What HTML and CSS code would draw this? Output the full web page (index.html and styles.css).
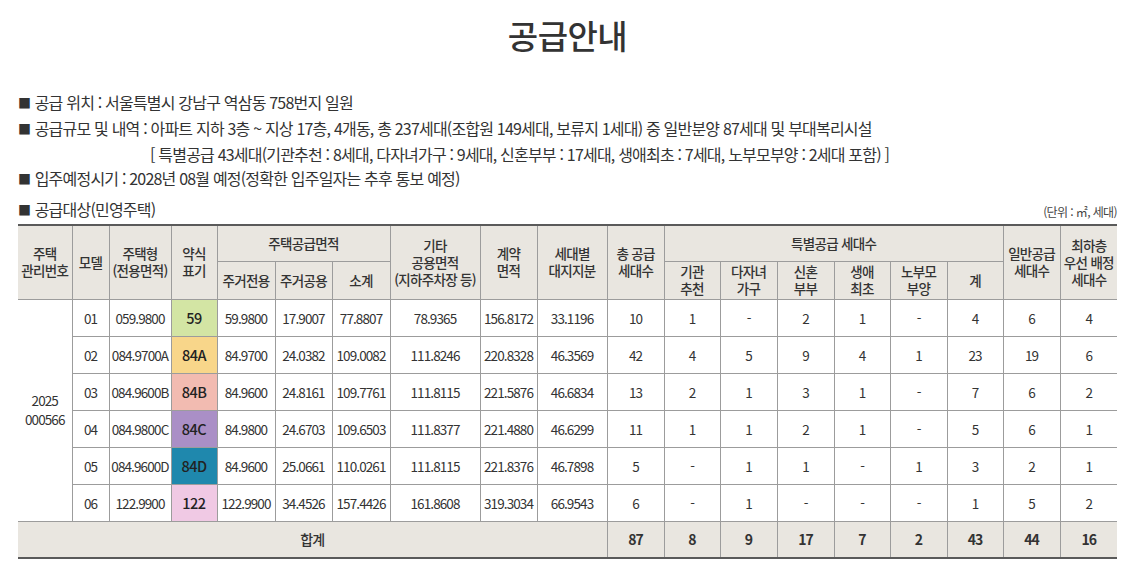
FILE: index.html
```html
<!DOCTYPE html>
<html lang="ko">
<head>
<meta charset="utf-8">
<title>공급안내</title>
<link rel="stylesheet" href="styles.css">
</head>
<body>
<div class="page">
  <h1 class="title">공급안내</h1>
  <ul class="info">
    <li><span class="sq">■</span> 공급 위치 : 서울특별시 강남구 역삼동 758번지 일원</li>
    <li><span class="sq">■</span> 공급규모 및 내역 : 아파트 지하 3층 ~ 지상 17층, 4개동, 총 237세대(조합원 149세대, 보류지 1세대) 중 일반분양 87세대 및 부대복리시설</li>
    <li class="indent">[ 특별공급 43세대(기관추천 : 8세대, 다자녀가구 : 9세대, 신혼부부 : 17세대, 생애최초 : 7세대, 노부모부양 : 2세대 포함) ]</li>
    <li><span class="sq">■</span> 입주예정시기 : 2028년 08월 예정(정확한 입주일자는 추후 통보 예정)</li>
  </ul>
  <div class="caption">
    <span class="cap-title"><span class="sq">■</span> 공급대상(민영주택)</span>
    <span class="unit">(단위 : ㎡, 세대)</span>
  </div>
  <table class="supply">
    <colgroup>
      <col class="w54"><col class="w37"><col class="w62"><col class="w46">
      <col class="w58"><col class="w57"><col class="w58"><col class="w90">
      <col class="w57"><col class="w70"><col class="w57"><col class="w56">
      <col class="w57"><col class="w57"><col class="w56"><col class="w57">
      <col class="w56"><col class="w57"><col class="w57">
    </colgroup>
    <thead>
      <tr class="h1">
        <th rowspan="2">주택<br>관리번호</th>
        <th rowspan="2">모델</th>
        <th rowspan="2">주택형<br>(전용면적)</th>
        <th rowspan="2">약식<br>표기</th>
        <th colspan="3">주택공급면적</th>
        <th rowspan="2">기타<br>공용면적<br>(지하주차장 등)</th>
        <th rowspan="2">계약<br>면적</th>
        <th rowspan="2">세대별<br>대지지분</th>
        <th rowspan="2">총 공급<br>세대수</th>
        <th colspan="6">특별공급 세대수</th>
        <th rowspan="2">일반공급<br>세대수</th>
        <th rowspan="2">최하층<br>우선 배정<br>세대수</th>
      </tr>
      <tr class="h2">
        <th>주거전용</th>
        <th>주거공용</th>
        <th>소계</th>
        <th>기관<br>추천</th>
        <th>다자녀<br>가구</th>
        <th>신혼<br>부부</th>
        <th>생애<br>최초</th>
        <th>노부모<br>부양</th>
        <th>계</th>
      </tr>
    </thead>
    <tbody>
      <tr>
        <td rowspan="6" class="mgmt">2025<br>000566</td>
        <td>01</td><td>059.9800</td><td class="tag t59">59</td>
        <td>59.9800</td><td>17.9007</td><td>77.8807</td><td>78.9365</td><td>156.8172</td><td>33.1196</td>
        <td>10</td><td>1</td><td>-</td><td>2</td><td>1</td><td>-</td><td>4</td><td>6</td><td>4</td>
      </tr>
      <tr>
        <td>02</td><td>084.9700A</td><td class="tag t84a">84A</td>
        <td>84.9700</td><td>24.0382</td><td>109.0082</td><td>111.8246</td><td>220.8328</td><td>46.3569</td>
        <td>42</td><td>4</td><td>5</td><td>9</td><td>4</td><td>1</td><td>23</td><td>19</td><td>6</td>
      </tr>
      <tr>
        <td>03</td><td>084.9600B</td><td class="tag t84b">84B</td>
        <td>84.9600</td><td>24.8161</td><td>109.7761</td><td>111.8115</td><td>221.5876</td><td>46.6834</td>
        <td>13</td><td>2</td><td>1</td><td>3</td><td>1</td><td>-</td><td>7</td><td>6</td><td>2</td>
      </tr>
      <tr>
        <td>04</td><td>084.9800C</td><td class="tag t84c">84C</td>
        <td>84.9800</td><td>24.6703</td><td>109.6503</td><td>111.8377</td><td>221.4880</td><td>46.6299</td>
        <td>11</td><td>1</td><td>1</td><td>2</td><td>1</td><td>-</td><td>5</td><td>6</td><td>1</td>
      </tr>
      <tr>
        <td>05</td><td>084.9600D</td><td class="tag t84d">84D</td>
        <td>84.9600</td><td>25.0661</td><td>110.0261</td><td>111.8115</td><td>221.8376</td><td>46.7898</td>
        <td>5</td><td>-</td><td>1</td><td>1</td><td>-</td><td>1</td><td>3</td><td>2</td><td>1</td>
      </tr>
      <tr>
        <td>06</td><td>122.9900</td><td class="tag t122">122</td>
        <td>122.9900</td><td>34.4526</td><td>157.4426</td><td>161.8608</td><td>319.3034</td><td>66.9543</td>
        <td>6</td><td>-</td><td>1</td><td>-</td><td>-</td><td>-</td><td>1</td><td>5</td><td>2</td>
      </tr>
    </tbody>
    <tfoot>
      <tr>
        <td colspan="10" class="sum-label">합계</td>
        <td>87</td><td>8</td><td>9</td><td>17</td><td>7</td><td>2</td><td>43</td><td>44</td><td>16</td>
      </tr>
    </tfoot>
  </table>
</div>
</body>
</html>
```
FILE: styles.css
```css
* { box-sizing: border-box; }
html, body {
  margin: 0;
  padding: 0;
  background: #ffffff;
}
body {
  font-family: "Noto Sans CJK KR", "Noto Sans", sans-serif;
  color: #333333;
}
.page {
  width: 1133px;
  padding: 0 16px 0 18px;
}
.title {
  margin: 0;
  padding-top: 12px;
  height: 90px;
  text-align: center;
  font-size: 33px;
  font-weight: 500;
  line-height: 46px;
  letter-spacing: -0.5px;
  color: #333;
}
.info {
  list-style: none;
  margin: 0;
  padding: 0;
  font-size: 16px;
  line-height: 24px;
  letter-spacing: -0.8px;
  color: #333;
}
.info li { white-space: nowrap; }
.info .indent { padding-left: 132px; }
.sq {
  font-size: 13px;
  letter-spacing: 0;
  position: relative;
  top: -1px;
}
.caption {
  display: flex;
  justify-content: space-between;
  align-items: flex-end;
  margin-top: 8px;
  height: 24px;
  padding-bottom: 2px;
}
.cap-title {
  font-size: 16px;
  letter-spacing: -0.8px;
  line-height: 22px;
}
.unit {
  font-size: 12px;
  letter-spacing: -0.6px;
  color: #444;
  line-height: 18px;
  padding-bottom: 1px;
}
.supply {
  width: 1099px;
  table-layout: fixed;
  border-collapse: collapse;
  font-size: 14px;
  letter-spacing: -0.9px;
  color: #333;
  border-top: 2px solid #5a5a5a;
  border-bottom: 2px solid #5a5a5a;
}
.w54 { width: 54px; } .w37 { width: 37px; } .w62 { width: 62px; }
.w46 { width: 46px; } .w58 { width: 58px; } .w57 { width: 57px; }
.w90 { width: 90px; } .w70 { width: 70px; } .w56 { width: 56px; }
.supply th, .supply td {
  border: 1px solid #9c9c9c;
  text-align: center;
  vertical-align: middle;
  padding: 0;
  white-space: nowrap;
}
.supply tr > :first-child { border-left: none; }
.supply tr > :last-child { border-right: none; }
.supply thead th {
  background: #e9e6e0;
  font-weight: 500;
  line-height: 17px;
  font-size: 13.5px;
  letter-spacing: -0.7px;
}
.supply thead tr.h1 { height: 36px; }
.supply thead tr.h2 { height: 38px; }
.supply tbody tr { height: 37px; }
.supply tbody td { font-weight: 400; font-size: 13.5px; }
.supply td.mgmt { border-left: none; line-height: 19px; }
.supply tbody tr:not(:first-child) > td:first-child { border-left: 1px solid #9c9c9c; }
.supply .tag { font-weight: 500; font-size: 14.5px; color: #222; letter-spacing: -0.5px; }
.t59 { background: #d3e5a4; }
.t84a { background: #f8d68a; }
.t84b { background: #f2bbb1; }
.t84c { background: #aa8fc6; }
.t84d { background: #1f88ad; }
.t122 { background: #f0c9e4; }
.supply tfoot tr { height: 37px; }
.supply tfoot td {
  background: #e9e6e0;
  font-weight: 700;
}
.supply tfoot td.sum-label { font-weight: 500; }
```
